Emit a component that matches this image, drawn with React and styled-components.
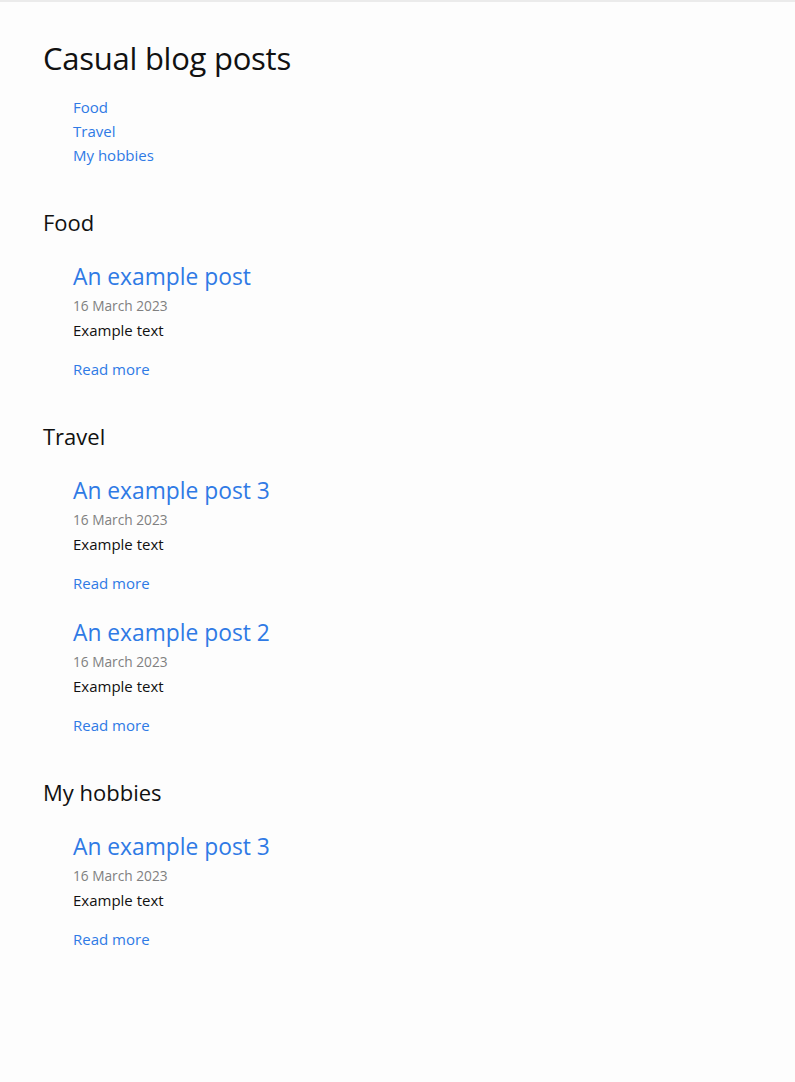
import styled, { createGlobalStyle } from 'styled-components';

const GlobalStyle = createGlobalStyle`
  html, body {
    margin: 0;
    padding: 0;
    background: #fdfdfd;
  }
  body {
    font-family: "Open Sans", "Noto Sans", sans-serif;
    color: #111;
    border-top: 2px solid #ebebeb;
  }
`;

const sections = [
  {
    name: 'Food',
    posts: [{ title: 'An example post', date: '16 March 2023', text: 'Example text' }],
  },
  {
    name: 'Travel',
    posts: [
      { title: 'An example post 3', date: '16 March 2023', text: 'Example text' },
      { title: 'An example post 2', date: '16 March 2023', text: 'Example text' },
    ],
  },
  {
    name: 'My hobbies',
    posts: [{ title: 'An example post 3', date: '16 March 2023', text: 'Example text' }],
  },
];

const App = () => {
  return (
    <Page>
      <GlobalStyle />
      <Title>Casual blog posts</Title>
      <Nav>
        {sections.map((s) => (
          <NavLink key={s.name} href="#">
            {s.name}
          </NavLink>
        ))}
      </Nav>
      {sections.map((s) => (
        <Section key={s.name}>
          <SectionTitle>{s.name}</SectionTitle>
          <PostList>
            {s.posts.map((p, i) => (
              <Post key={i}>
                <PostTitle href="#">{p.title}</PostTitle>
                <PostDate>{p.date}</PostDate>
                <PostText>{p.text}</PostText>
                <ReadMore href="#">Read more</ReadMore>
              </Post>
            ))}
          </PostList>
        </Section>
      ))}
    </Page>
  );
};

const Page = styled.main`
  padding: 36px 43px 80px;
  display: flex;
  flex-direction: column;
`;

const Title = styled.h1`
  margin: 0;
  font-size: 31px;
  line-height: 40px;
  font-weight: 400;
  letter-spacing: -0.25px;
`;

const Nav = styled.nav`
  margin-top: 17px;
  padding-left: 30px;
  display: flex;
  flex-direction: column;
  align-items: flex-start;
`;

const NavLink = styled.a`
  font-size: 15px;
  line-height: 24px;
  color: #2f7ae5;
  text-decoration: none;
`;

const Section = styled.section`
  margin-top: 40px;
`;

const SectionTitle = styled.h2`
  margin: 0;
  font-size: 22px;
  line-height: 30px;
  font-weight: 400;
`;

const PostList = styled.div`
  margin-top: 24px;
  padding-left: 30px;
  display: flex;
  flex-direction: column;
  gap: 22px;
`;

const Post = styled.article`
  display: flex;
  flex-direction: column;
  align-items: flex-start;
`;

const PostTitle = styled.a`
  font-size: 22.8px;
  line-height: 32px;
  color: #2f7ae5;
  text-decoration: none;
`;

const PostDate = styled.time`
  margin-top: 3px;
  font-size: 13.7px;
  line-height: 20px;
  color: #808080;
`;

const PostText = styled.p`
  margin: 2px 0 0;
  font-size: 15px;
  line-height: 24px;
  color: #111;
`;

const ReadMore = styled.a`
  margin-top: 15px;
  font-size: 15px;
  line-height: 24px;
  color: #2f7ae5;
  text-decoration: none;
`;

export default App;
